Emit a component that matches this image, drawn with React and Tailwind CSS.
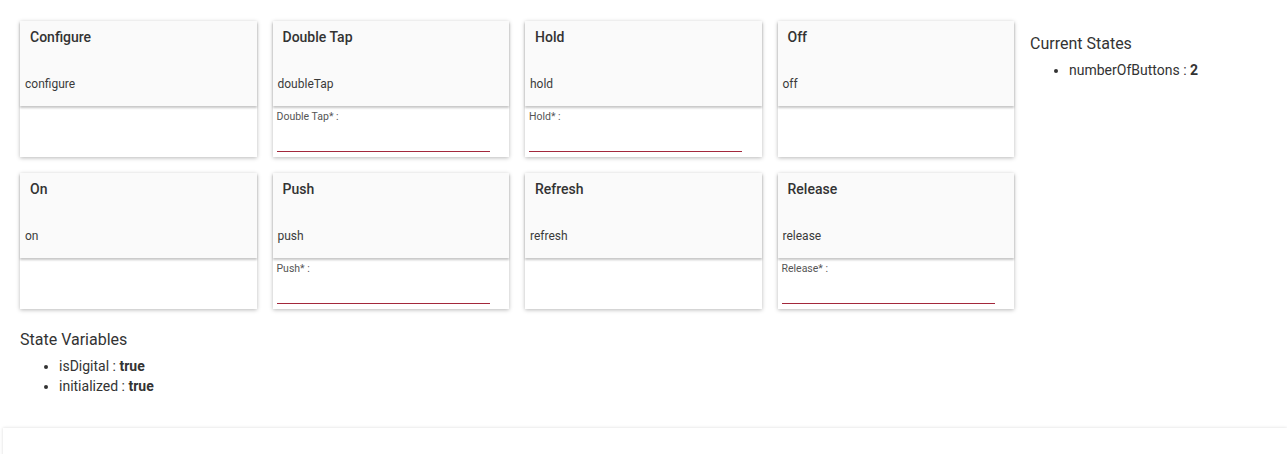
const commands = [
  { title: 'Configure', name: 'configure' },
  { title: 'Double Tap', name: 'doubleTap', input: 'Double Tap* :' },
  { title: 'Hold', name: 'hold', input: 'Hold* :' },
  { title: 'Off', name: 'off' },
  { title: 'On', name: 'on' },
  { title: 'Push', name: 'push', input: 'Push* :' },
  { title: 'Refresh', name: 'refresh' },
  { title: 'Release', name: 'release', input: 'Release* :' },
];

function CommandCard({ cmd }) {
  return (
    <div className="bg-white shadow-[0_1px_4px_rgba(0,0,0,0.28)] h-[136px] flex flex-col">
      {/* Header */}
      <div className="h-[85px] bg-[#fafafa] shadow-[0_2px_2px_rgba(0,0,0,0.22)] flex flex-col relative z-10">
        <div className="pt-[6px] pl-[10px] text-[14px] leading-[20px] font-medium text-[#333]">{cmd.title}</div>
        <div className="mt-[29px] pl-[5px] text-[12px] leading-[16px] text-[#3a3a3a]">{cmd.name}</div>
      </div>

      {/* Params */}
      <div className="flex-1 pt-[4px] px-[4px]">
        {cmd.input && (
          <div className="flex flex-col">
            <label className="text-[10.5px] leading-[13px] text-[#555]">{cmd.input}</label>
            <div className="mt-[28px] w-[213px] h-px bg-[#a3283c]" />
          </div>
        )}
      </div>
    </div>
  );
}

export default function App() {
  return (
    <div className="min-h-[454px] bg-white font-['Roboto','Liberation_Sans',sans-serif] text-[#333]">
      <div className="flex pt-[21px] pl-[20px]">
        <div className="grid grid-cols-4 gap-x-4 gap-y-4 w-[994px]">
          {commands.map((c) => (
            <CommandCard key={c.name} cmd={c} />
          ))}
        </div>

        {/* Current states */}
        <div className="pl-[16px] pt-[13px]">
          <h3 className="text-[16px] leading-[20px] text-[#333]">Current States</h3>
          <ul className="list-disc pl-[39px] mt-[6px] text-[14px] leading-[20px]">
            <li>numberOfButtons : <b className="font-bold">2</b></li>
          </ul>
        </div>
      </div>

      {/* State variables */}
      <div className="pl-[20px] mt-[21px]">
        <h3 className="text-[16px] leading-[20px] text-[#333]">State Variables</h3>
        <ul className="list-disc pl-[39px] mt-[6px] text-[14px] leading-[20px]">
          <li>isDigital : <b className="font-bold">true</b></li>
          <li>initialized : <b className="font-bold">true</b></li>
        </ul>
      </div>

      <div className="ml-[3px] mt-[32px] h-[30px] bg-white shadow-[0_0_3px_rgba(0,0,0,0.15)]" />
    </div>
  );
}
